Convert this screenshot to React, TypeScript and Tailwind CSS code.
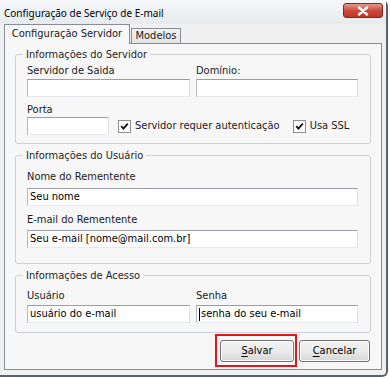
import type { ReactNode } from "react";

function TextBox({ value = "", caret = false, className = "" }: { value?: string; caret?: boolean; className?: string }) {
  return (
    <div
      className={`h-[18px] bg-white border border-t-[#9a9ea6] border-l-[#b4b8bf] border-r-[#dde2e8] border-b-[#e6eaef] flex items-center pl-[2px] text-black whitespace-nowrap overflow-hidden ${className}`}
    >
      {caret && <span className="w-px h-[13px] bg-black mr-px" />}
      {value}
    </div>
  );
}

function CheckBox({ label }: { label: string }) {
  return (
    <div className="flex items-center gap-[4px]">
      <span className="w-[13px] h-[13px] border border-[#8e8f8f] bg-white flex items-center justify-center">
        <svg width="9" height="9" viewBox="0 0 9 9">
          <path d="M1.2 4.2 L3.4 6.6 L7.8 1.6" stroke="#111" strokeWidth="1.8" fill="none" />
        </svg>
      </span>
      <span>{label}</span>
    </div>
  );
}

function Group({ title, className = "", children }: { title: string; className?: string; children: ReactNode }) {
  return (
    <fieldset className={`border border-[#cdd1d5] rounded-[3px] px-[11px] ${className}`}>
      <legend className="-ml-[4px] px-[3px] leading-[13px] text-[#1e1e1e]">{title}</legend>
      {children}
    </fieldset>
  );
}

function Button({ label, accel, className = "" }: { label: string; accel: string; className?: string }) {
  return (
    <div
      className={`h-[22px] flex items-center justify-center border border-[#707070] rounded-[3px] bg-gradient-to-b from-[#f2f2f2] via-[#ebebeb] to-[#d6d6d6] shadow-[inset_0_0_0_1px_#fcfcfc] text-black ${className}`}
    >
      <span>
        <span className="underline underline-offset-2">{accel}</span>
        {label}
      </span>
    </div>
  );
}

export default function App() {
  return (
    <div className="w-[390px] h-[379px] bg-white overflow-hidden font-['DejaVu_Sans_Condensed','DejaVu_Sans',sans-serif] text-[11px] text-[#1a1a1a]">
      <div className="w-[388px] h-[377px] bg-[#eef1f4] border-r-2 border-b-2 border-[#5e6266] rounded-br-[6px] rounded-tr-[6px] flex flex-col">
        {/* title bar */}
        <div className="h-[24px] flex items-start justify-between bg-gradient-to-b from-[#f6f8fa] to-[#e6ebef]">
          <div className="pl-[4px] pt-[6px] font-['Noto_Sans',sans-serif] text-[10px] leading-[14px] text-black">
            Configuração de Serviço de E-mail
          </div>
          <div className="mt-[3px] mr-[3px] w-[40px] h-[15px] rounded-[3px] border border-[#7a2a22] bg-gradient-to-b from-[#e2998e] via-[#cc4a3a] to-[#c23522] flex items-center justify-center">
            <svg width="12" height="10" viewBox="0 0 12 10">
              <path d="M2 1.5 L10 8.5 M10 1.5 L2 8.5" stroke="#fff" strokeWidth="2.4" strokeLinecap="round" />
            </svg>
          </div>
        </div>

        {/* client area */}
        <div className="ml-[4px] w-[379px] h-[346px] bg-[#f0f0f0] flex flex-col">
          {/* tabs */}
          <div className="flex items-end h-[20px]">
            <div className="relative z-10 h-[20px] w-[126px] bg-[#f7f7f7] border border-b-0 border-[#898c95] flex items-center justify-center pb-[1px]">
              Configuração Servidor
            </div>
            <div className="h-[16px] ml-[1px] w-[50px] bg-gradient-to-b from-[#f2f2f2] to-[#e3e3e3] border border-b-0 border-[#898c95] flex items-center justify-center">
              Modelos
            </div>
          </div>

          {/* tab panel */}
          <div className="-mt-px w-[378px] h-[327px] border border-[#898c95] bg-[#f7f7f7] px-[10px] pt-[4px] flex flex-col">
            <Group title="Informações do Servidor" className="pb-[8px]">
              <div className="grid grid-cols-[163px_162px] gap-x-[6px] mt-[3px] leading-[14px]">
                <div>Servidor de Saida</div>
                <div>Domínio:</div>
              </div>
              <div className="grid grid-cols-[163px_162px] gap-x-[6px] mt-[1px]">
                <TextBox />
                <TextBox />
              </div>
              <div className="mt-[6px] leading-[14px]">Porta</div>
              <div className="flex items-center">
                <TextBox className="w-[82px]" />
                <div className="ml-[9px]">
                  <CheckBox label="Servidor requer autenticação" />
                </div>
                <div className="ml-[13px]">
                  <CheckBox label="Usa SSL" />
                </div>
              </div>
            </Group>

            <Group title="Informações do Usuário" className="mt-[5px] pb-[15px]">
              <div className="mt-[8px] leading-[14px]">Nome do Rementente</div>
              <TextBox value="Seu nome" className="mt-[4px] w-[331px]" />
              <div className="mt-[7px] leading-[14px]">E-mail do Rementente</div>
              <TextBox value="Seu e-mail [nome@mail.com.br]" className="mt-[3px] w-[331px]" />
            </Group>

            <Group title="Informações de Acesso" className="mt-[5px] pb-[9px]">
              <div className="grid grid-cols-[163px_162px] gap-x-[6px] mt-[7px] leading-[14px]">
                <div>Usuário</div>
                <div>Senha</div>
              </div>
              <div className="grid grid-cols-[163px_162px] gap-x-[6px] mt-[2px]">
                <TextBox value="usuário do e-mail" />
                <TextBox value="senha do seu e-mail" caret />
              </div>
            </Group>

            <div className="flex justify-end items-start mt-px pr-px">
              <div className="border-2 border-[#e2141c] pl-[3px] pr-[1px] pt-[4px] pb-[3px]">
                <Button label="alvar" accel="S" className="w-[74px]" />
              </div>
              <Button label="ancelar" accel="C" className="w-[71px] ml-[2px] mt-[6px]" />
            </div>
          </div>
        </div>
      </div>
    </div>
  );
}
